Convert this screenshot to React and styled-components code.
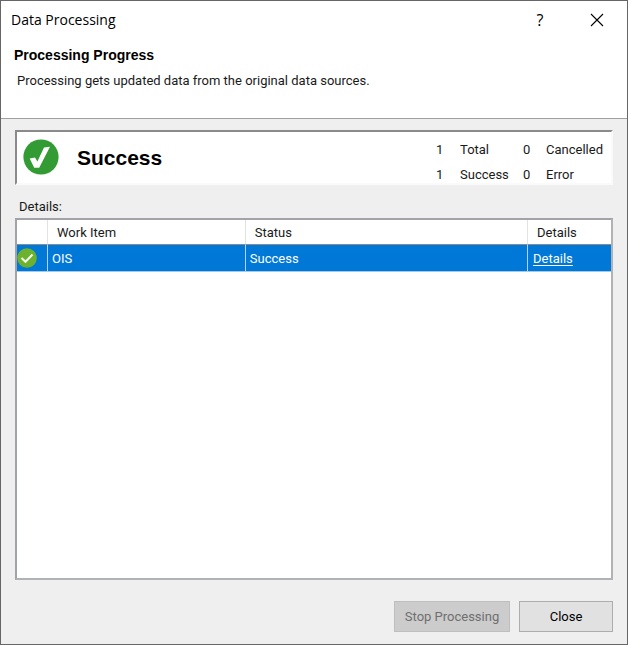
import React from "react";
import styled, { createGlobalStyle } from "styled-components";

const GlobalStyle = createGlobalStyle`
  * { box-sizing: border-box; }
  body {
    margin: 0;
    background: #efefef;
    color: #1a1a1a;
    font: 13px/18px Roboto, "Liberation Sans", sans-serif;
  }
`;

const Dialog = styled.main`
  display: flex;
  flex-direction: column;
  min-height: 100vh;
  border: 1px solid #666568;
  background: #efefef;
`;

const Header = styled.header`
  height: 118px;
  flex: none;
  background: #fff;
  border-bottom: 1px solid #a0a0a0;
`;

const TitleBar = styled.div`
  display: flex;
  align-items: center;
  height: 38px;
  padding: 0 8px 0 10px;
`;

const WindowTitle = styled.h1`
  flex: 1;
  margin: 0;
  font: 400 14px/20px "Open Sans", "Noto Sans", sans-serif;
  color: #000;
`;

const CaptionButton = styled.button`
  display: flex;
  align-items: center;
  justify-content: center;
  width: ${(p) => (p.$wide ? 44 : 70)}px;
  height: 36px;
  padding: 0;
  border: 0;
  background: transparent;
  color: #000;
  font: 16px/20px "Open Sans", "Noto Sans", sans-serif;
`;

const Heading = styled.h2`
  margin: 7px 0 0 13px;
  font: 700 14px/18px "Liberation Sans", sans-serif;
  color: #000;
`;

const Subtitle = styled.p`
  margin: 8px 0 0 16px;
`;

const Body = styled.section`
  display: flex;
  flex: 1;
  flex-direction: column;
  padding: 11px 14px 12px;
`;

const Summary = styled.div`
  display: flex;
  align-items: center;
  height: 55px;
  flex: none;
  padding: 0 4px 2px 6px;
  background: #fff;
  border: 2px solid;
  border-color: #8a8a8a #fafafa #fafafa #8a8a8a;
`;

const SummaryTitle = styled.strong`
  flex: 1;
  padding: 2px 0 0 18px;
  font: 700 21px/24px "Liberation Sans", sans-serif;
  color: #000;
`;

const Counts = styled.dl`
  display: grid;
  align-self: flex-start;
  grid-template-columns: 24px 63px 23px 61px;
  row-gap: 7px;
  margin: 0;
  padding-top: 9px;
  dt, dd { margin: 0; }
`;

const DetailsLabel = styled.h3`
  margin: 13px 0 2px 4px;
  font: inherit;
`;

const ListBox = styled.div`
  flex: 1;
  background: #fff;
  border: 2px solid;
  border-color: #a2a3a9 #b0b2b8 #b0b2b8 #a2a3a9;
`;

const Table = styled.table`
  width: 100%;
  table-layout: fixed;
  border-collapse: separate;
  border-spacing: 0;
  th, td {
    padding: 2px 0 0 4px;
    text-align: left;
    font-weight: 400;
    border-right: 1px solid #e2e2e2;
  }
  th { height: 25px; padding-left: 9px; border-bottom: 1px solid #8b8b8b; }
  td {
    height: 27px;
    color: #fff;
    background: #0078d7;
    border-right-color: #b5d5ef;
    border-bottom: 1px solid #a5c9e8;
  }
  td:first-child { padding: 0; }
  th:last-child, td:last-child { border-right: 0; }
  td:last-child { padding-left: 5px; }
  svg { display: block; }
`;

const Col = styled.col`
  width: ${(p) => p.$width};
`;

const DetailsLink = styled.a`
  color: inherit;
  text-decoration: underline;
  text-underline-offset: 2px;
`;

const Footer = styled.footer`
  display: flex;
  justify-content: flex-end;
  gap: 9px;
  padding-top: 21px;
`;

const Button = styled.button`
  width: ${(p) => (p.$wide ? 116 : 94)}px;
  height: 31px;
  padding: 0;
  border: 1px solid #adadad;
  background: #e1e1e1;
  color: #000;
  font: inherit;
  white-space: nowrap;
  &:disabled {
    border-color: #bfbfbf;
    background: #ccc;
    color: #6f6f6f;
  }
`;

const CloseIcon = () => (
  <svg width="14" height="14" viewBox="0 0 14 14" aria-hidden="true">
    <path d="M1 1L13 13M13 1L1 13" stroke="#000" strokeWidth="1.1" fill="none" />
  </svg>
);

const SuccessIcon = () => (
  <svg width="36" height="36" viewBox="0 0 36 36" aria-hidden="true">
    <circle cx="18" cy="18" r="17.6" fill="#339b33" />
    <path d="M6.7 19.4L12 18.4L14.4 22.4L21 8.6L27 7.8L16.2 28.8L11.2 28.8Z" fill="#fff" />
  </svg>
);

const RowSuccessIcon = () => (
  <svg width="20" height="20" viewBox="0 0 20 20" aria-hidden="true">
    <circle cx="10" cy="10" r="9.8" fill="#6cb22f" />
    <path d="M4.5 10L8.5 13.8L15.5 6.5" fill="none" stroke="#f4faec" strokeWidth="2" />
  </svg>
);

const counts = [
  [1, "Total"],
  [0, "Cancelled"],
  [1, "Success"],
  [0, "Error"],
];

const items = [{ name: "OIS", status: "Success" }];

export default function App() {
  return (
    <>
      <GlobalStyle />
      <Dialog>
        <Header>
          <TitleBar>
            <WindowTitle>Data Processing</WindowTitle>
            <CaptionButton aria-label="Help">?</CaptionButton>
            <CaptionButton $wide aria-label="Close window"><CloseIcon /></CaptionButton>
          </TitleBar>
          <Heading>Processing Progress</Heading>
          <Subtitle>Processing gets updated data from the original data sources.</Subtitle>
        </Header>
        <Body>
          <Summary>
            <SuccessIcon />
            <SummaryTitle>Success</SummaryTitle>
            <Counts>
              {counts.map(([count, label]) => (
                <React.Fragment key={label}>
                  <dt>{count}</dt>
                  <dd>{label}</dd>
                </React.Fragment>
              ))}
            </Counts>
          </Summary>
          <DetailsLabel>Details:</DetailsLabel>
          <ListBox>
            <Table>
              <colgroup>
                <Col $width="31px" />
                <Col $width="33.3%" />
                <Col />
                <Col $width="83px" />
              </colgroup>
              <thead>
                <tr>
                  <th aria-label="Result" />
                  <th>Work Item</th>
                  <th>Status</th>
                  <th>Details</th>
                </tr>
              </thead>
              <tbody>
                {items.map((item) => (
                  <tr key={item.name}>
                    <td><RowSuccessIcon /></td>
                    <td>{item.name}</td>
                    <td>{item.status}</td>
                    <td><DetailsLink href="#details">Details</DetailsLink></td>
                  </tr>
                ))}
              </tbody>
            </Table>
          </ListBox>
          <Footer>
            <Button $wide disabled>Stop Processing</Button>
            <Button>Close</Button>
          </Footer>
        </Body>
      </Dialog>
    </>
  );
}
